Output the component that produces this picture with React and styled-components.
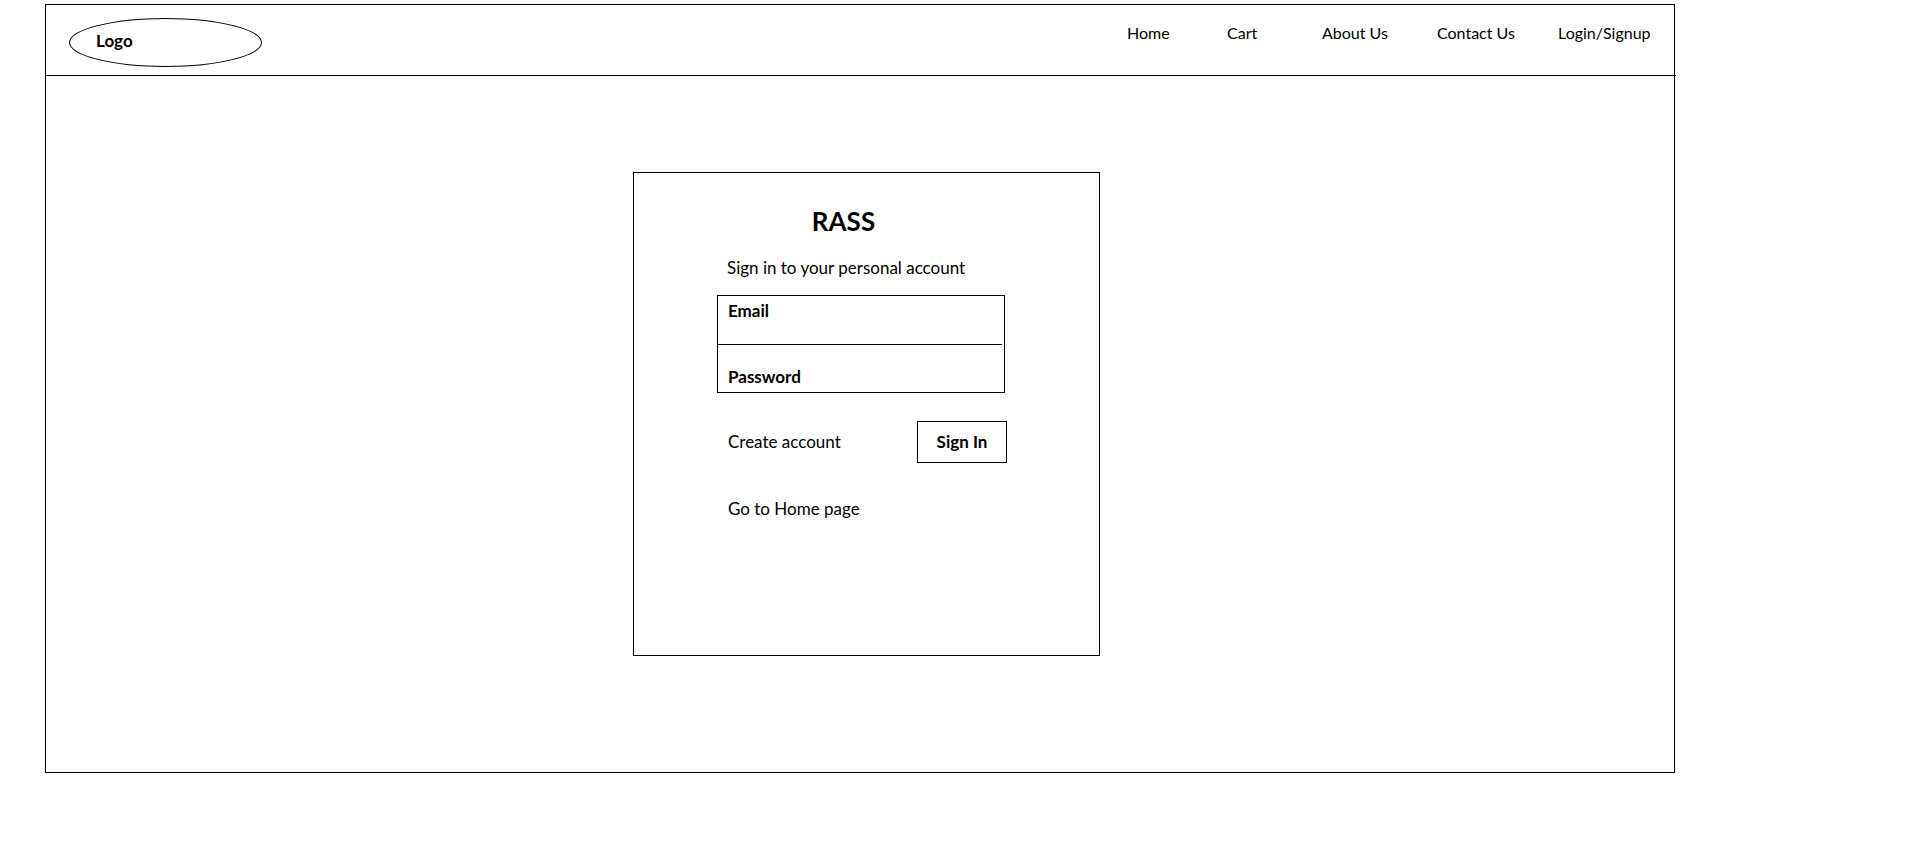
import React from "react";
import styled, { createGlobalStyle } from "styled-components";

const GlobalStyle = createGlobalStyle`
  *, *::before, *::after { box-sizing: border-box; }
  body {
    margin: 0;
    background: #fff;
    color: #000;
    font: 400 17px/24px Lato, "Liberation Sans", sans-serif;
  }
`;

const Page = styled.div`
  padding: 4px 239px 69px 45px;

  @media (max-width: 1200px) {
    padding: 4px 16px 16px;
  }
`;

const Frame = styled.div`
  border: 1px solid #000;
`;

const Header = styled.header`
  display: flex;
  align-items: flex-start;
  justify-content: space-between;
  min-height: 71px;
  margin-right: -2px;
  padding: 0 25px 0 23px;
  border-bottom: 1px solid #000;
`;

const Logo = styled.a`
  width: 193px;
  height: 49px;
  margin-top: 13px;
  padding: 10px 26px;
  border: 1px solid #000;
  border-radius: 50%;
  color: inherit;
  font-weight: 700;
  text-decoration: none;
`;

const Nav = styled.nav`
  display: grid;
  grid-template-columns: 100px 95px 115px 121px 93px;
  padding-top: 16px;
  font-size: 16px;

  @media (max-width: 860px) {
    display: flex;
    flex-wrap: wrap;
    gap: 0 16px;
  }
`;

const TextLink = styled.a`
  color: inherit;
  text-decoration: none;
  white-space: nowrap;
`;

const Main = styled.main`
  display: flex;
  justify-content: center;
  padding: 96px 0 116px 13px;
`;

const Card = styled.section`
  width: 467px;
  min-height: 484px;
  padding: 32px 92px 32px 83px;
  border: 1px solid #000;
`;

const Title = styled.h1`
  margin: 0 0 19px;
  padding-right: 37px;
  font-size: 26px;
  line-height: 32px;
  text-align: center;
`;

const Subtitle = styled.p`
  margin: 0 0 15px;
  padding-left: 10px;
  white-space: nowrap;
`;

const Fields = styled.div`
  display: grid;
  grid-template-columns: minmax(0, 1fr);
  grid-template-rows: 48px 1px 47px;
  margin-right: 2px;
  border: 1px solid #000;
`;

const Field = styled.div`
  display: flex;
  align-items: ${({ $align }) => $align};
  padding: 3px 10px;
`;

const Divider = styled.div`
  margin-right: 2px;
  background: #000;
`;

const Label = styled.label`
  font-weight: 700;
`;

const Input = styled.input`
  flex: 1;
  min-width: 0;
  height: 24px;
  padding: 0 8px;
  border: 0;
  outline: 0;
  background: transparent;
  font: inherit;
`;

const Actions = styled.div`
  display: flex;
  align-items: center;
  justify-content: space-between;
  margin: 28px 0 34px;
  padding-left: 11px;
`;

const Button = styled.button`
  width: 90px;
  height: 42px;
  padding: 0;
  border: 1px solid #000;
  background: #fff;
  color: inherit;
  font: inherit;
  font-weight: 700;
  cursor: pointer;
`;

const Footer = styled.div`
  padding-left: 11px;
`;

const links = ["Home", "Cart", "About Us", "Contact Us", "Login/Signup"];

export default function App() {
  return (
    <Page>
      <GlobalStyle />
      <Frame>
        <Header>
          <Logo href="#">Logo</Logo>
          <Nav aria-label="Main">
            {links.map((text) => (
              <TextLink key={text} href="#">{text}</TextLink>
            ))}
          </Nav>
        </Header>
        <Main>
          <Card>
            <Title>RASS</Title>
            <Subtitle>Sign in to your personal account</Subtitle>
            <form onSubmit={(event) => event.preventDefault()}>
              <Fields>
                <Field $align="flex-start">
                  <Label htmlFor="email">Email</Label>
                  <Input id="email" type="email" />
                </Field>
                <Divider />
                <Field $align="flex-end">
                  <Label htmlFor="password">Password</Label>
                  <Input id="password" type="password" />
                </Field>
              </Fields>
              <Actions>
                <TextLink href="#">Create account</TextLink>
                <Button type="submit">Sign In</Button>
              </Actions>
            </form>
            <Footer>
              <TextLink href="#">Go to Home page</TextLink>
            </Footer>
          </Card>
        </Main>
      </Frame>
    </Page>
  );
}
